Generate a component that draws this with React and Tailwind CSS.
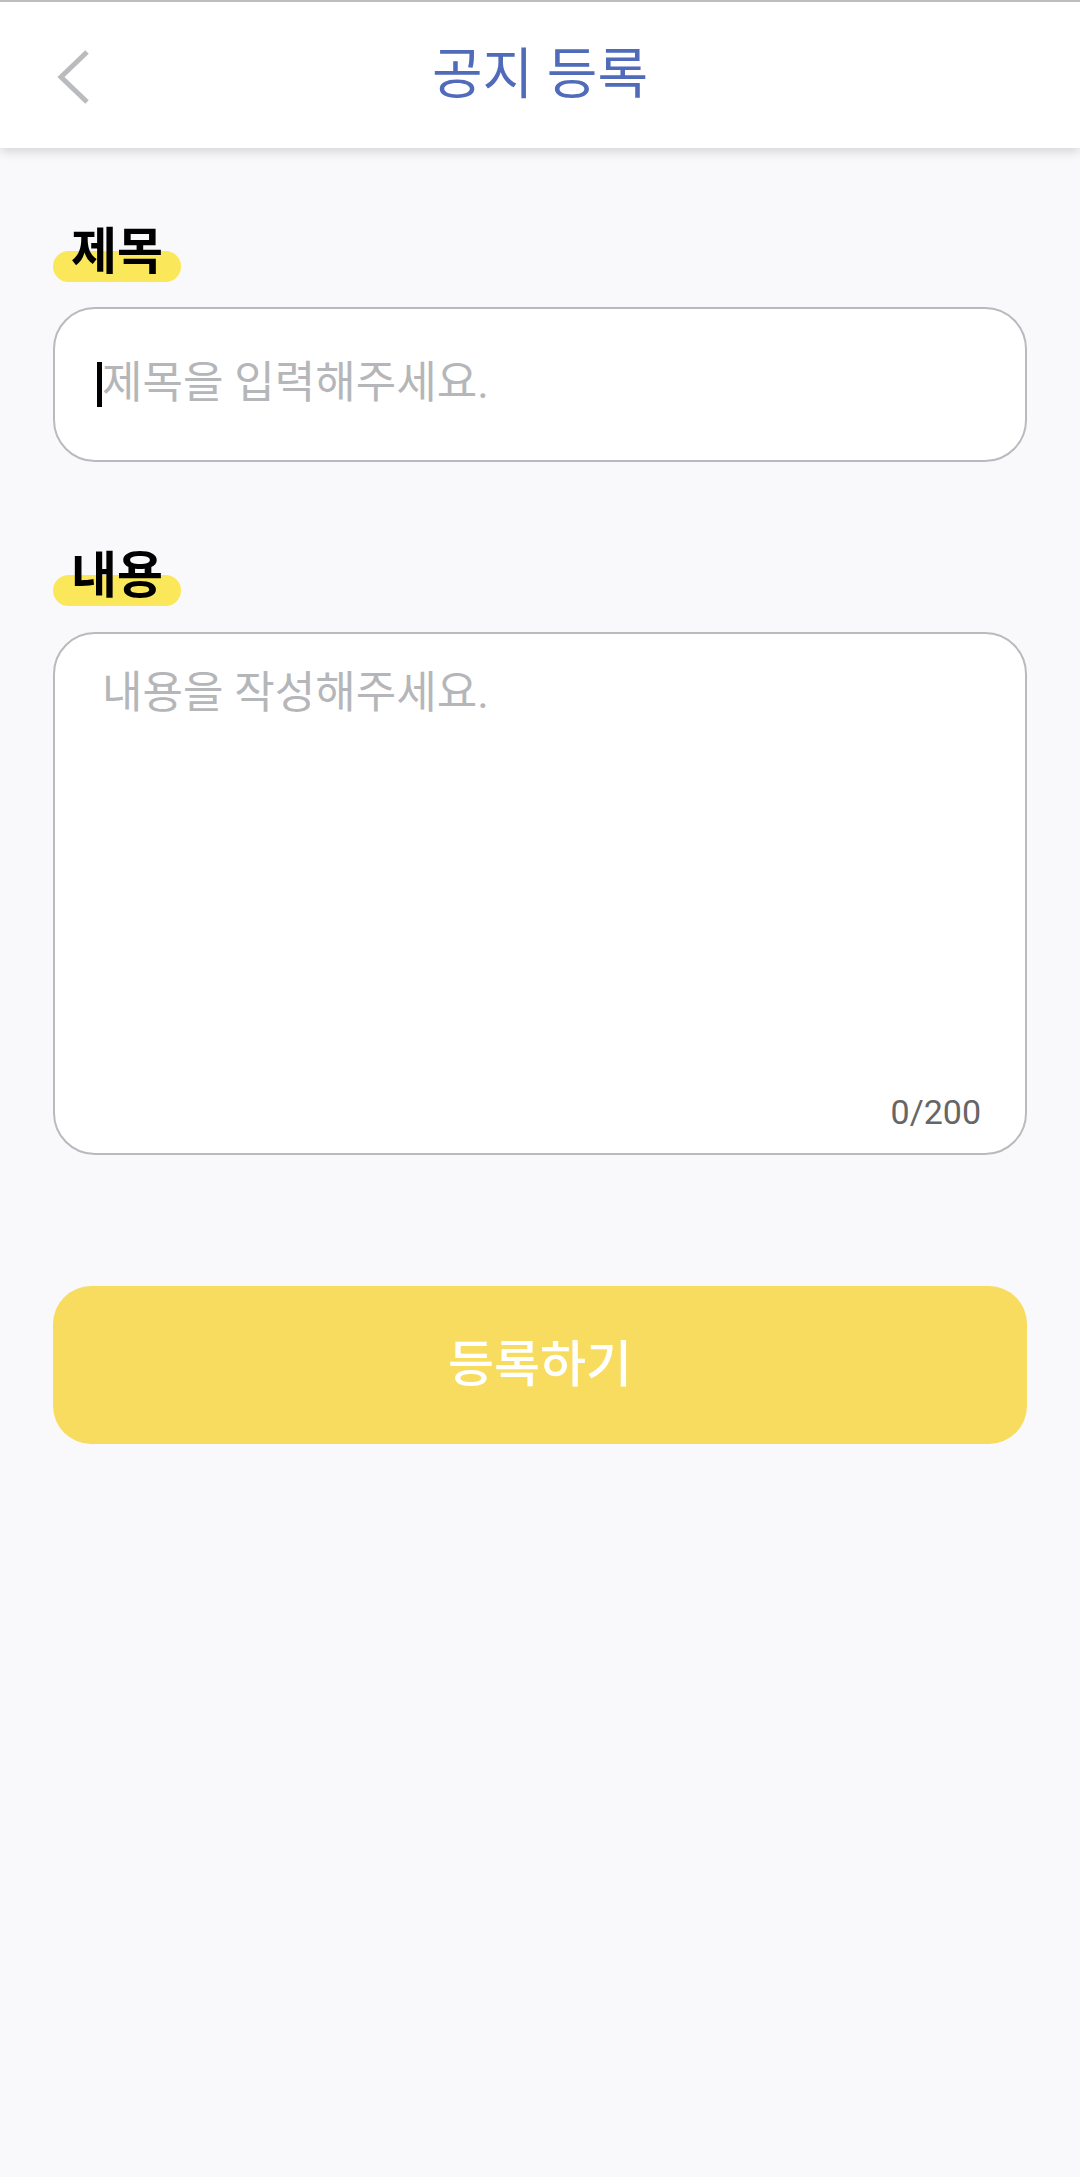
import React from 'react';

const font = { fontFamily: 'Roboto, "Noto Sans CJK KR", sans-serif' };

const Label = ({ children }) => (
    <div className="relative inline-block px-[18px]">
        {/* yellow marker behind the label */}
        <span className="absolute left-0 right-0 bottom-[-4px] h-[31px] rounded-full bg-[#fbe85a]" />
        <span className="relative text-[50px] leading-[52px] font-bold text-black">{children}</span>
    </div>
);

const App = () => {
    return (
        <div className="min-h-[2177px] bg-[#f9f9fb] flex flex-col" style={font}>
            {/* Header */}
            <div className="border-t-2 border-[#bdbdbd] bg-white h-[148px] flex items-center relative shadow-[0_4px_10px_rgba(0,0,0,0.14)] z-10">
                <button className="absolute left-[56px] top-[47px] w-[36px] h-[56px] flex items-center justify-center">
                    <svg width="36" height="56" viewBox="0 0 36 56" fill="none">
                        <polyline points="31,3 5,28 31,53" stroke="#b9bbbe" strokeWidth="5" strokeLinejoin="miter" />
                    </svg>
                </button>
                <h1 className="w-full text-center text-[55px] leading-none font-normal text-[#4f6bba] mt-[-2px]">공지 등록</h1>
            </div>

            {/* Form */}
            <div className="px-[53px] pt-[78px] flex flex-col">
                <div>
                    <Label>제목</Label>
                </div>
                <div className="mt-[29px] h-[155px] rounded-[42px] border-2 border-[#b9babe] bg-white flex items-center pl-[42px]">
                    <span className="w-[5px] h-[45px] bg-black" />
                    <span className="text-[44px] leading-none text-[#b5b6b9] mt-[-4px]">제목을 입력해주세요.</span>
                </div>

                <div className="mt-[88px]">
                    <Label>내용</Label>
                </div>
                <div className="mt-[30px] h-[523px] rounded-[42px] border-2 border-[#b9babe] bg-white flex flex-col justify-between pl-[47px] pr-[44px] pt-[31px] pb-[24px]">
                    <span className="text-[44px] leading-[56px] text-[#b5b6b9]">내용을 작성해주세요.</span>
                    <span className="self-end text-[34px] leading-none text-[#666666]">0/200</span>
                </div>

                <button className="mt-[131px] h-[158px] w-full rounded-[38px] bg-[#f8dc5f] text-white text-[50px] font-medium flex items-center justify-center">
                    등록하기
                </button>
            </div>
        </div>
    );
};

export default App;
